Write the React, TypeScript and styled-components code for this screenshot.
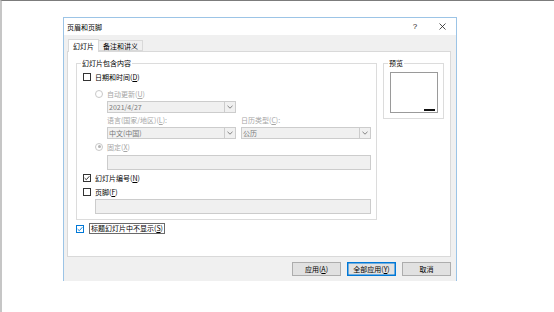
import React from "react";
import styled, { createGlobalStyle } from "styled-components";

const GlobalStyle = createGlobalStyle`
  html, body {
    margin: 0;
    padding: 0;
    background: #ffffff;
  }
  body {
    font-family: "Noto Sans CJK SC", "Noto Sans", "Liberation Sans", sans-serif;
    font-size: 7px;
    color: #000;
  }
`;

function CheckMark({ color }: { color: string }) {
  return (
    <svg width="6" height="6" viewBox="0 0 6 6">
      <polyline points="0.6,3.1 2.3,4.7 5.4,1.2" fill="none" stroke={color} strokeWidth="0.9" />
    </svg>
  );
}

function CloseIcon() {
  return (
    <svg width="7" height="7" viewBox="0 0 7 7">
      <path d="M0.5 0.5 L6.5 6.5 M6.5 0.5 L0.5 6.5" stroke="#222" strokeWidth="0.8" />
    </svg>
  );
}

function Chevron() {
  return (
    <svg width="6" height="4" viewBox="0 0 6 4">
      <polyline points="0.5,0.8 3,3.2 5.5,0.8" fill="none" stroke="#666" strokeWidth="0.8" />
    </svg>
  );
}

function PreviewPicture() {
  return (
    <svg width="48" height="41" viewBox="0 0 48 41">
      <rect x="0.5" y="0.5" width="47" height="40" fill="#fff" stroke="#9a9a9a" />
      <rect x="34" y="37" width="11" height="2" fill="#111" />
    </svg>
  );
}

function Label({ text, mn }: { text: string; mn?: string }) {
  return (
    <span>
      {text}
      {mn && (
        <>
          (<u>{mn}</u>)
        </>
      )}
    </span>
  );
}

export default function App() {
  return (
    <>
      <GlobalStyle />
      <Page>
        <Dialog>
          <TitleBar>
            <TitleText>页眉和页脚</TitleText>
            <TitleButton $width={28}>?</TitleButton>
            <TitleButton $width={27}>
              <CloseIcon />
            </TitleButton>
          </TitleBar>
          <Body>
            <TabStrip>
              <Tab $active>幻灯片</Tab>
              <Tab>备注和讲义</Tab>
            </TabStrip>
            <TabPanel>
              <GroupsRow>
                <GroupBox $width={301}>
                  <Legend>幻灯片包含内容</Legend>
                  <OptionRow $top={4}>
                    <CheckBox />
                    <Label text="日期和时间" mn="D" />
                  </OptionRow>
                  <OptionRow $top={8} $indent={12} $disabled>
                    <Radio />
                    <Label text="自动更新" mn="U" />
                  </OptionRow>
                  <Indented $top={3}>
                    <DropDown $width={129}>
                      <DropText>2021/4/27</DropText>
                      <DropButton>
                        <Chevron />
                      </DropButton>
                    </DropDown>
                  </Indented>
                  <Indented $top={3}>
                    <SelectGrid>
                      <FieldLabel>
                        <Label text="语言(国家/地区)" mn="L" />:
                      </FieldLabel>
                      <FieldLabel>
                        <Label text="日历类型" mn="C" />:
                      </FieldLabel>
                      <DropDown $width={129}>
                        <DropText>中文(中国)</DropText>
                        <DropButton>
                          <Chevron />
                        </DropButton>
                      </DropDown>
                      <DropDown $width={130}>
                        <DropText>公历</DropText>
                        <DropButton>
                          <Chevron />
                        </DropButton>
                      </DropDown>
                    </SelectGrid>
                  </Indented>
                  <OptionRow $top={3} $indent={12} $disabled>
                    <Radio $checked />
                    <Label text="固定" mn="X" />
                  </OptionRow>
                  <Indented $top={4}>
                    <TextField $width={264} />
                  </Indented>
                  <OptionRow $top={3}>
                    <CheckBox>
                      <CheckMark color="#222" />
                    </CheckBox>
                    <Label text="幻灯片编号" mn="N" />
                  </OptionRow>
                  <OptionRow $top={5}>
                    <CheckBox />
                    <Label text="页脚" mn="F" />
                  </OptionRow>
                  <Indented $top={3} $indent={12}>
                    <TextField $width={276} />
                  </Indented>
                </GroupBox>
                <GroupBox $width={61}>
                  <Legend>预览</Legend>
                  <PreviewFrame>
                    <PreviewPicture />
                  </PreviewFrame>
                </GroupBox>
              </GroupsRow>
              <OptionRow $top={4}>
                <CheckBox $focused>
                  <CheckMark color="#0078d7" />
                </CheckBox>
                <FocusLabel>
                  <Label text="标题幻灯片中不显示" mn="S" />
                </FocusLabel>
              </OptionRow>
            </TabPanel>
            <ButtonRow>
              <Button>
                <Label text="应用" mn="A" />
              </Button>
              <Button $default>
                <Label text="全部应用" mn="Y" />
              </Button>
              <Button>取消</Button>
            </ButtonRow>
          </Body>
        </Dialog>
      </Page>
    </>
  );
}

const Page = styled.div`
  width: 554px;
  height: 312px;
  box-sizing: border-box;
  border-top: 1px solid #7c7c7c;
  border-left: 2px solid #c6c6c6;
  padding: 16px 0 0 61px;
  overflow: hidden;
`;

const Dialog = styled.div`
  width: 394px;
  height: 264px;
  box-sizing: border-box;
  border: 1px solid #9cc4e6;
  border-bottom: none;
  display: flex;
  flex-direction: column;
`;

const TitleBar = styled.div`
  height: 17px;
  flex: none;
  display: flex;
  align-items: center;
  padding-left: 3px;
  background: #ffffff;
`;

const TitleText = styled.span`
  flex: 1;
  font-size: 7px;
`;

const TitleButton = styled.span<{ $width: number }>`
  width: ${(p) => p.$width}px;
  display: flex;
  align-items: center;
  justify-content: center;
  font-family: "Liberation Sans", sans-serif;
  font-size: 8px;
  color: #222;
`;

const Body = styled.div`
  flex: 1;
  background: #f0f0f0;
  padding: 4px 5px 0 3px;
  display: flex;
  flex-direction: column;
`;

const TabStrip = styled.div`
  display: flex;
  align-items: flex-end;
  height: 12px;
  padding-left: 1px;
  position: relative;
  z-index: 1;
`;

const Tab = styled.div<{ $active?: boolean }>`
  box-sizing: border-box;
  height: ${(p) => (p.$active ? 13 : 11)}px;
  margin-bottom: ${(p) => (p.$active ? -1 : 0)}px;
  padding: 0 4px;
  display: flex;
  align-items: center;
  background: ${(p) => (p.$active ? "#ffffff" : "#f0f0f0")};
  border: 1px solid #d9d9d9;
  border-bottom: ${(p) => (p.$active ? "none" : "1px solid #d9d9d9")};
  margin-left: ${(p) => (p.$active ? 0 : -1)}px;
`;

const TabPanel = styled.div`
  height: 206px;
  box-sizing: border-box;
  background: #ffffff;
  border: 1px solid #d9d9d9;
  padding: 6px 6px 0 8px;
`;

const GroupsRow = styled.div`
  display: flex;
  align-items: flex-start;
  gap: 6px;
`;

const GroupBox = styled.fieldset<{ $width: number }>`
  margin: 0;
  min-width: 0;
  width: ${(p) => p.$width}px;
  box-sizing: border-box;
  border: 1px solid #dcdcdc;
  padding: 0 5px 5px 6px;
`;

const Legend = styled.legend`
  margin-left: -2px;
  padding: 0 1px;
  font-size: 7px;
  line-height: 10px;
`;

const OptionRow = styled.div<{ $top: number; $indent?: number; $disabled?: boolean }>`
  display: flex;
  align-items: center;
  gap: 4px;
  height: 9px;
  margin-top: ${(p) => p.$top}px;
  padding-left: ${(p) => p.$indent || 0}px;
  color: ${(p) => (p.$disabled ? "#a6a6a6" : "#000")};
  white-space: nowrap;
`;

const CheckBox = styled.span<{ $focused?: boolean }>`
  width: 8px;
  height: 8px;
  box-sizing: border-box;
  flex: none;
  border: 1px solid ${(p) => (p.$focused ? "#0078d7" : "#333")};
  background: #fff;
  display: flex;
  align-items: center;
  justify-content: center;
`;

const Radio = styled.span<{ $checked?: boolean }>`
  width: 8px;
  height: 8px;
  box-sizing: border-box;
  flex: none;
  border-radius: 50%;
  border: 1px solid #c8c8c8;
  background: #fff;
  display: flex;
  align-items: center;
  justify-content: center;
  &::after {
    content: "";
    width: 3px;
    height: 3px;
    border-radius: 50%;
    background: ${(p) => (p.$checked ? "#b4b4b4" : "transparent")};
  }
`;

const FocusLabel = styled.span`
  border: 1px solid #6a6a6a;
  padding: 0 1px;
  line-height: 9px;
  margin-left: 1px;
`;

const Indented = styled.div<{ $top: number; $indent?: number }>`
  margin-top: ${(p) => p.$top}px;
  padding-left: ${(p) => p.$indent ?? 24}px;
`;

const SelectGrid = styled.div`
  display: grid;
  grid-template-columns: 129px 130px;
  column-gap: 5px;
  row-gap: 2px;
`;

const FieldLabel = styled.div`
  height: 9px;
  line-height: 9px;
  color: #a6a6a6;
  white-space: nowrap;
`;

const DropDown = styled.div<{ $width: number }>`
  width: ${(p) => p.$width}px;
  height: 12px;
  box-sizing: border-box;
  border: 1px solid #cccccc;
  background: #f0f0f0;
  display: flex;
  align-items: stretch;
`;

const DropText = styled.span`
  flex: 1;
  padding-left: 1px;
  line-height: 10px;
  color: #7a7a7a;
  font-size: 7px;
`;

const DropButton = styled.span`
  width: 10px;
  border-left: 1px solid #cccccc;
  display: flex;
  align-items: center;
  justify-content: center;
`;

const TextField = styled.div<{ $width: number }>`
  width: ${(p) => p.$width}px;
  height: 15px;
  box-sizing: border-box;
  border: 1px solid #cccccc;
  background: #f0f0f0;
`;

const PreviewFrame = styled.div`
  display: flex;
  margin-top: 4px;
`;

const ButtonRow = styled.div`
  display: flex;
  justify-content: flex-end;
  gap: 6px;
  padding-top: 5px;
`;

const Button = styled.div<{ $default?: boolean }>`
  width: 49px;
  height: 14px;
  box-sizing: border-box;
  display: flex;
  align-items: center;
  justify-content: center;
  background: #e1e1e1;
  border: 1px solid ${(p) => (p.$default ? "#0078d7" : "#adadad")};
  box-shadow: ${(p) => (p.$default ? "inset 0 0 0 0.5px #0078d7" : "none")};
  white-space: nowrap;
`;
